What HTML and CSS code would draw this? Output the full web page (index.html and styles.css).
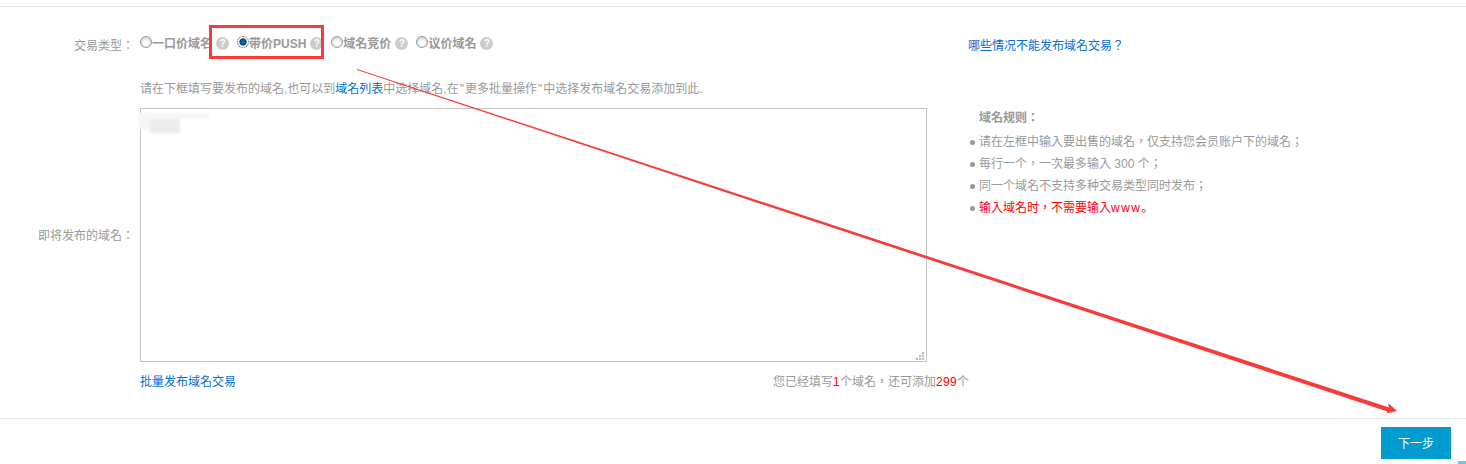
FILE: index.html
```html
<!DOCTYPE html>
<html>
	<head>
		<title>发布域名交易</title>
		<link rel="stylesheet" href="styles.css">
	</head>
	<body>
		<div class="form_area">
			<div class="label type_label">交易类型：</div>
			<div class="type_list">
				<label class="type_item"><input type="radio" name="tipo"><span>一口价域名</span><i class="help">?</i></label>
				<label class="type_item"><input type="radio" name="tipo" checked><span>带价PUSH</span><i class="help">?</i></label>
				<label class="type_item"><input type="radio" name="tipo"><span>域名竞价</span><i class="help">?</i></label>
				<label class="type_item"><input type="radio" name="tipo"><span>议价域名</span><i class="help">?</i></label>
			</div>
			<a class="link why_link" href="#">哪些情况不能发布域名交易？</a>

			<div class="label domain_label">即将发布的域名：</div>
			<div class="domain_box">
				<p class="hint">请在下框填写要发布的域名,也可以到<a class="link" href="#">域名列表</a>中选择域名,在<span class="quote">"</span>更多批量操作<span class="quote">"</span>中选择发布域名交易添加到此.</p>
				<div class="area_wrap">
					<textarea class="domains"></textarea>
					<div class="smudge smudge_a"></div>
					<div class="smudge smudge_c"></div>
					<div class="smudge smudge_b"></div>
					<svg class="grip" width="10" height="10" viewBox="0 0 10 10">
						<rect x="7" y="1" width="2" height="2"/>
						<rect x="4" y="4" width="2" height="2"/>
						<rect x="7" y="4" width="2" height="2"/>
						<rect x="1" y="7" width="2" height="2"/>
						<rect x="4" y="7" width="2" height="2"/>
						<rect x="7" y="7" width="2" height="2"/>
					</svg>
				</div>
				<div class="box_foot">
					<a class="link" href="#">批量发布域名交易</a>
					<span class="count">您已经填写<b>1</b>个域名，还可添加<b>299</b>个</span>
				</div>
			</div>
			<div class="rules">
				<h4>域名规则：</h4>
				<ul>
					<li>请在左框中输入要出售的域名，仅支持您会员账户下的域名；</li>
					<li>每行一个，一次最多输入 300 个；</li>
					<li>同一个域名不支持多种交易类型同时发布；</li>
					<li class="warn">输入域名时，不需要输入<span class="www">www</span><span class="stop">。</span></li>
				</ul>
			</div>
		</div>

		<div class="bottom_bar">
			<button class="next" type="button">下一步</button>
		</div>
		<div class="corner"></div>

		<div class="mark_box"></div>
		<svg class="mark_arrow" width="1466" height="464" viewBox="0 0 1466 464">
			<polygon points="357,69 1389,407.5 1388,403 1397,411 1386,413.5 1387.5,411.5 357,70" fill="#f73a3a"/>
		</svg>
	</body>
</html>
```
FILE: styles.css
```css
html, body
{
	margin: 0;
	padding: 0;
}

body
{
	position: relative;
	height: 464px;
	overflow: hidden;
	background: #fff;
	font-family: "Liberation Sans", "Noto Sans CJK TC", sans-serif;
	font-size: 12px;
	color: #999;
}

.link
{
	color: #006dd9;
	text-decoration: none;
}

.form_area
{
	display: grid;
	grid-template-columns: 140px 828px 1fr;
	grid-template-rows: 74px auto;
	margin-top: 6px;
	border-top: 1px solid #e3e8ec;
	height: 411px;
}

.label
{
	text-align: right;
	padding-right: 6px;
	color: #999;
	line-height: 17px;
}

.type_label
{
	padding-top: 31px;
}

.type_list
{
	display: flex;
	padding-top: 28px;
	align-items: flex-start;
}

.type_item
{
	display: flex;
	align-items: flex-start;
	font-weight: bold;
	color: #999;
	line-height: 17px;
	margin-right: 8px;
}

.type_item span
{
	padding-top: 1px;
}

.type_item input
{
	appearance: none;
	width: 12px;
	height: 12px;
	margin: 1px 0 0;
	border: 1px solid #999;
	border-radius: 50%;
	background: radial-gradient(circle at 50% 60%, #fff 25%, #c8c8c8 90%);
	box-sizing: border-box;
}

.type_item input:checked
{
	background: radial-gradient(circle, #0a7db8 0, #05446e 45%, #fff 58%, #ccc 100%);
	border: 1px dotted #555;
}

.help
{
	width: 13px;
	height: 13px;
	margin: 2px 0 0 4px;
	border-radius: 50%;
	background: #ccc;
	color: #fff;
	font-style: normal;
	font-size: 10px;
	line-height: 13px;
	text-align: center;
}

.why_link
{
	padding-top: 31px;
	line-height: 17px;
}

.domain_label
{
	padding-top: 147px;
}

.hint
{
	margin: 0 0 10px;
	line-height: 17px;
}

.quote
{
	padding: 0 1px;
}

.area_wrap
{
	position: relative;
	width: 787px;
	height: 254px;
}

.domains
{
	display: block;
	width: 100%;
	height: 100%;
	margin: 0;
	box-sizing: border-box;
	border: 1px solid #c4c4c4;
	outline: none;
	resize: none;
	background: #fff;
}

.grip
{
	position: absolute;
	right: 2px;
	bottom: 1px;
	fill: #bbb;
}

.smudge
{
	position: absolute;
	filter: blur(1px);
}

.smudge_a
{
	left: -2px;
	top: 5px;
	width: 72px;
	height: 6px;
	border-radius: 4px;
	background: #f5f5f5;
}

.smudge_b
{
	left: 10px;
	top: 11px;
	width: 30px;
	height: 14px;
	background: #ececec;
}

.smudge_c
{
	left: -2px;
	top: 5px;
	width: 14px;
	height: 17px;
	border-radius: 5px;
	background: #f5f5f5;
}

.box_foot
{
	display: flex;
	justify-content: space-between;
	width: 829px;
	margin-top: 12px;
	line-height: 17px;
}

.count b
{
	color: #f00;
	font-weight: normal;
	letter-spacing: 0.3px;
}

.rules
{
	padding-top: 27px;
	line-height: 22px;
}

.rules h4
{
	margin: 0 0 3px 11px;
	font-size: 12px;
	font-weight: bold;
	line-height: 20px;
}

.rules ul
{
	margin: 0;
	padding: 0 0 0 11px;
}

.rules li
{
	position: relative;
	height: 22px;
	list-style: none;
}

.rules li::before
{
	content: "";
	position: absolute;
	left: -9px;
	top: 9px;
	width: 5px;
	height: 5px;
	border-radius: 50%;
	background: #999;
}

.rules .warn
{
	color: #f00;
}

.www
{
	letter-spacing: 1.5px;
}

.stop
{
	font-family: "Noto Sans CJK SC", sans-serif;
	line-height: 1;
}

.bottom_bar
{
	display: flex;
	justify-content: flex-end;
	border-top: 1px solid #e3e8ec;
	padding: 8px 15px 0 0;
}

.next
{
	width: 70px;
	height: 32px;
	border: 0;
	padding: 0 0 2px;
	background: #009ccf;
	color: #fff;
	font-family: inherit;
	font-size: 12px;
}

.corner
{
	position: absolute;
	right: 0;
	bottom: 0;
	width: 8px;
	height: 3px;
	background: #5bd0ea;
}

.mark_box
{
	position: absolute;
	left: 209px;
	top: 25px;
	width: 109px;
	height: 28px;
	border: 3px solid #f73a3a;
}

.mark_arrow
{
	position: absolute;
	left: 0;
	top: 0;
}
```
